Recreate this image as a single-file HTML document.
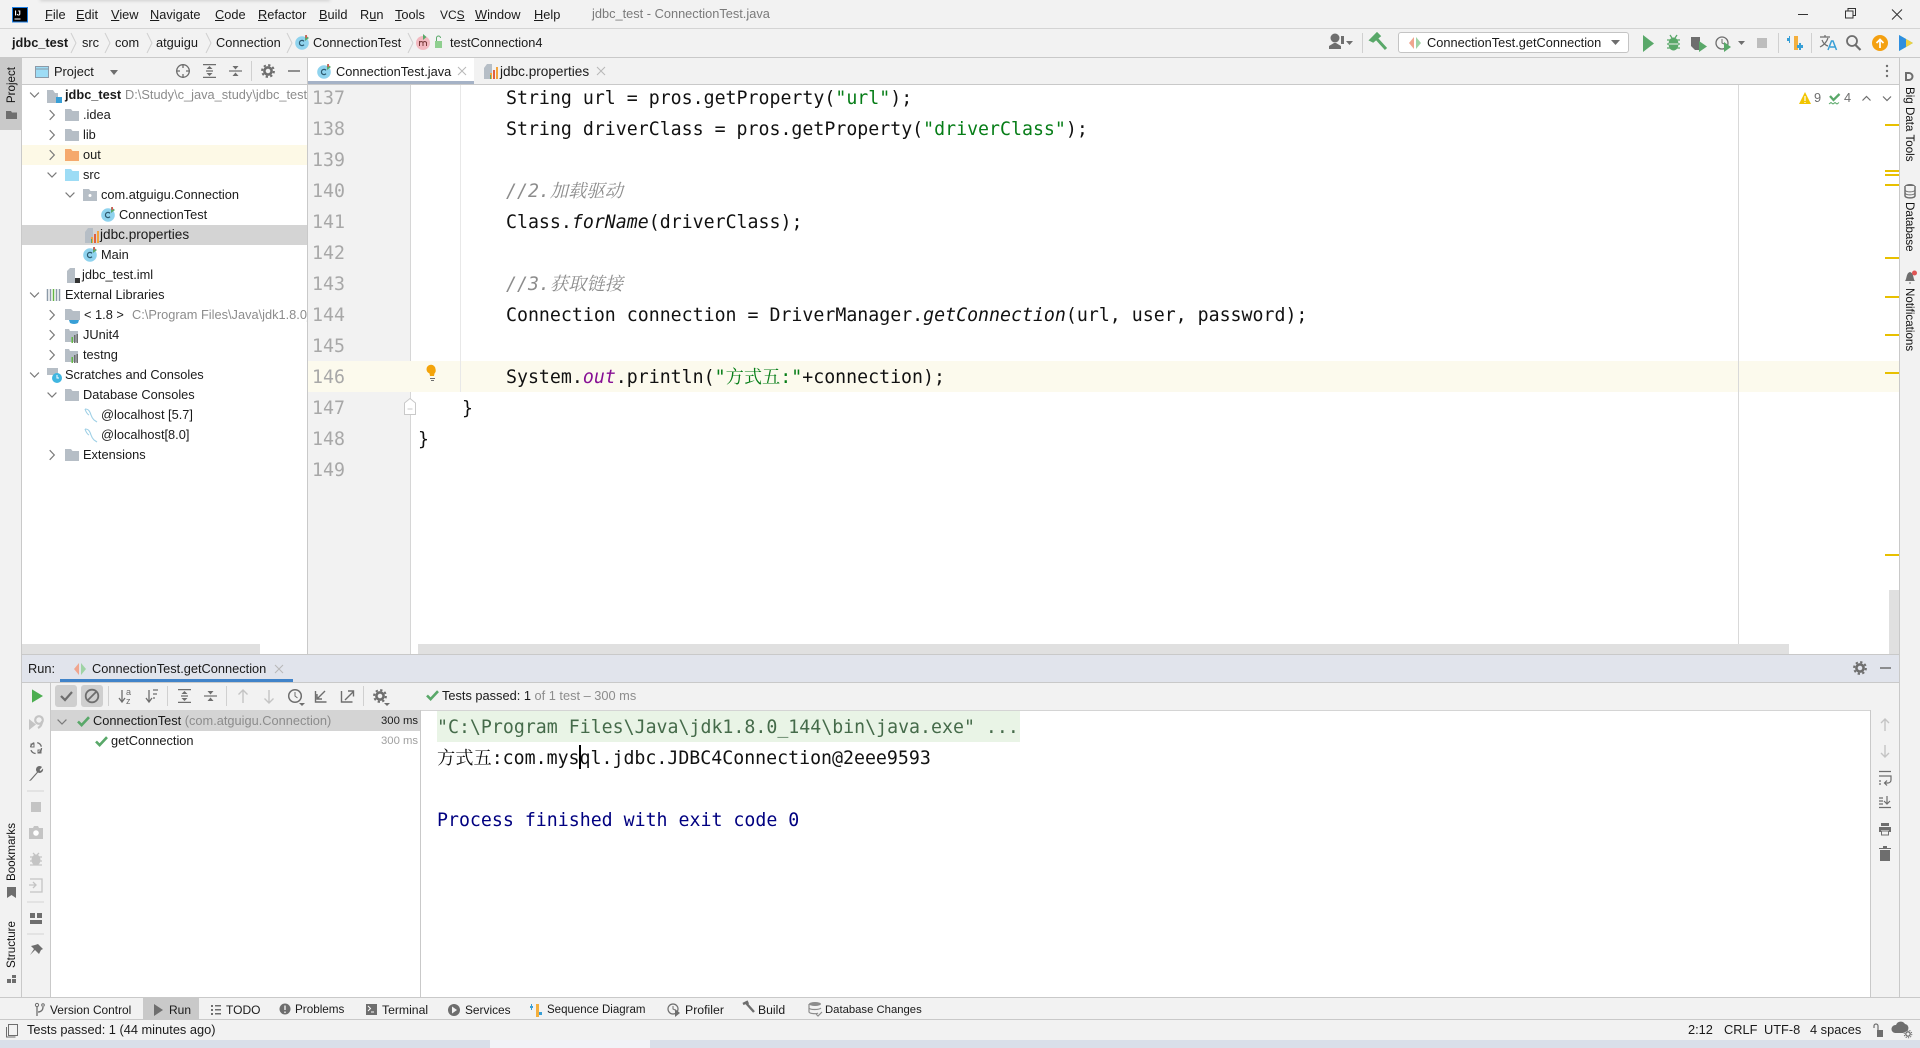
<!DOCTYPE html>
<html><head><meta charset="utf-8"><title>jdbc_test - ConnectionTest.java</title>
<style>
html,body{margin:0;padding:0;width:1920px;height:1048px;overflow:hidden;background:#f2f2f2}
body{position:relative;font-family:"Liberation Sans","Noto Sans CJK SC",sans-serif;font-size:12.8px;color:#1a1a1a}
.b{position:absolute}
.t{position:absolute;white-space:pre;line-height:20px;height:20px}
.g{color:#8c8c8c}
.code{position:absolute;white-space:pre;line-height:31px;height:31px;font-family:"DejaVu Sans Mono","Noto Serif CJK SC",monospace;font-size:18.24px;color:#111}
.n{color:#a8a8a8;left:312px}
.s{color:#067d17}
.c{color:#8c8c8c;font-style:italic}
.i{font-style:italic}
.p{color:#871094;font-style:italic}
.v{position:absolute;writing-mode:vertical-rl;font-size:11.6px;line-height:14px;white-space:pre;color:#111}
.r{transform:rotate(180deg)}
svg{position:absolute;left:0;top:0;overflow:visible}
</style></head><body>
<!-- regions -->
<div class="b" style="left:40px;top:-3px;width:290px;height:4px;background:#cfcfcf;filter:blur(1.5px)"></div>
<div class="b" style="left:0;top:28px;width:1920px;height:1px;background:#d4d4d4"></div>
<div class="b" style="left:0;top:57px;width:1920px;height:1px;background:#c9c9c9"></div>
<div class="b" style="left:0;top:58px;width:21px;height:72px;background:#c9c9c9"></div>
<div class="b" style="left:21px;top:58px;width:1px;height:939px;background:#c9c9c9"></div>
<div class="b" style="left:1899px;top:58px;width:1px;height:939px;background:#c9c9c9"></div>
<div class="b" style="left:22px;top:84px;width:1877px;height:1px;background:#c9c9c9"></div>
<!-- combo -->
<div class="b" style="left:1398px;top:32px;width:229px;height:19px;border:1px solid #c4c4c4;border-radius:3px;background:#fff"></div>
<!-- project panel -->
<div class="b" style="left:22px;top:85px;width:285px;height:569px;background:#fff"></div>
<div class="b" style="left:22px;top:145px;width:285px;height:20px;background:#fdf9e6"></div>
<div class="b" style="left:22px;top:225px;width:285px;height:20px;background:#d4d4d4"></div>
<div class="b" style="left:22px;top:644px;width:238px;height:10px;background:#e0e0e0"></div>
<div class="b" style="left:307px;top:58px;width:1px;height:596px;background:#c9c9c9"></div>
<!-- tabs -->
<div class="b" style="left:308px;top:58px;width:166px;height:26px;background:#fff"></div>
<div class="b" style="left:308px;top:81px;width:166px;height:3px;background:#a5b2c6"></div>
<!-- editor -->
<div class="b" style="left:308px;top:85px;width:102px;height:569px;background:#f2f2f2"></div>
<div class="b" style="left:410px;top:85px;width:1489px;height:569px;background:#fff"></div>
<div class="b" style="left:410px;top:85px;width:1px;height:569px;background:#d6d6d6"></div>
<div class="b" style="left:308px;top:361px;width:1591px;height:31px;background:#fcfaed"></div>
<div class="b" style="left:460px;top:85px;width:1px;height:307px;background:#e8e8e8"></div>
<div class="b" style="left:1738px;top:85px;width:1px;height:569px;background:#d9d9d9"></div>
<div class="b" style="left:418px;top:644px;width:1371px;height:10px;background:#e0e0e0"></div>
<div class="b" style="left:1889px;top:590px;width:10px;height:64px;background:#e0e0e0"></div>
<!-- stripes -->
<div class="b" style="left:1885px;top:124px;width:14px;height:2px;background:#e8c000"></div>
<div class="b" style="left:1885px;top:170px;width:14px;height:2px;background:#e8c000"></div>
<div class="b" style="left:1885px;top:174px;width:14px;height:2px;background:#e8c000"></div>
<div class="b" style="left:1885px;top:184px;width:14px;height:2px;background:#e8c000"></div>
<div class="b" style="left:1885px;top:257px;width:14px;height:2px;background:#e8c000"></div>
<div class="b" style="left:1885px;top:296px;width:14px;height:2px;background:#e8c000"></div>
<div class="b" style="left:1885px;top:334px;width:14px;height:2px;background:#e8c000"></div>
<div class="b" style="left:1885px;top:372px;width:14px;height:2px;background:#e8c000"></div>
<div class="b" style="left:1885px;top:554px;width:14px;height:2px;background:#e8c000"></div>
<!-- run window -->
<div class="b" style="left:22px;top:654px;width:1877px;height:28px;background:#e1e4ec;border-top:1px solid #c9c9c9;box-sizing:border-box"></div>
<div class="b" style="left:22px;top:682px;width:1877px;height:1px;background:#c9c9c9"></div>
<div class="b" style="left:60px;top:679px;width:233px;height:3px;background:#4083c9"></div>
<div class="b" style="left:50px;top:683px;width:1px;height:314px;background:#c9c9c9"></div>
<div class="b" style="left:51px;top:710px;width:1820px;height:287px;background:#fff"></div>
<div class="b" style="left:51px;top:710px;width:1820px;height:1px;background:#d4d4d4"></div>
<div class="b" style="left:51px;top:711px;width:369px;height:20px;background:#d4d4d4"></div>
<div class="b" style="left:420px;top:710px;width:1px;height:287px;background:#c9c9c9"></div>
<div class="b" style="left:1870px;top:710px;width:1px;height:287px;background:#c9c9c9"></div>
<div class="b" style="left:437px;top:711px;width:583px;height:31px;background:#e9f4e6"></div>
<div class="b" style="left:55px;top:685px;width:22px;height:22px;background:#cfcfcf;border-radius:3px"></div>
<div class="b" style="left:81px;top:685px;width:22px;height:22px;background:#cfcfcf;border-radius:3px"></div>
<!-- bottom -->
<div class="b" style="left:0;top:997px;width:1920px;height:1px;background:#c9c9c9"></div>
<div class="b" style="left:0;top:1019px;width:1920px;height:1px;background:#c9c9c9"></div>
<div class="b" style="left:143px;top:998px;width:56px;height:21px;background:#c9c9c9"></div>
<div class="b" style="left:0;top:1040px;width:490px;height:8px;background:#d9dfe9"></div>
<div class="b" style="left:490px;top:1040px;width:160px;height:8px;background:#f1f3f7"></div>
<div class="b" style="left:650px;top:1040px;width:1270px;height:8px;background:#d9dfe9"></div>

<!-- menu -->
<div class="t" style="left:45px;top:5px"><u>F</u>ile</div>
<div class="t" style="left:76px;top:5px"><u>E</u>dit</div>
<div class="t" style="left:111px;top:5px"><u>V</u>iew</div>
<div class="t" style="left:150px;top:5px"><u>N</u>avigate</div>
<div class="t" style="left:215px;top:5px"><u>C</u>ode</div>
<div class="t" style="left:258px;top:5px"><u>R</u>efactor</div>
<div class="t" style="left:319px;top:5px"><u>B</u>uild</div>
<div class="t" style="left:360px;top:5px">R<u>u</u>n</div>
<div class="t" style="left:395px;top:5px"><u>T</u>ools</div>
<div class="t" style="left:440px;top:5px;font-size:12px">VC<u>S</u></div>
<div class="t" style="left:475px;top:5px"><u>W</u>indow</div>
<div class="t" style="left:534px;top:5px"><u>H</u>elp</div>
<div class="t" style="left:592px;top:4px;color:#7a7a7a">jdbc_test - ConnectionTest.java</div>
<!-- breadcrumbs -->
<div class="t" style="left:12px;top:33px;font-weight:bold">jdbc_test</div>
<div class="t" style="left:82px;top:33px">src</div>
<div class="t" style="left:115px;top:33px">com</div>
<div class="t" style="left:156px;top:33px">atguigu</div>
<div class="t" style="left:216px;top:33px">Connection</div>
<div class="t" style="left:313px;top:33px">ConnectionTest</div>
<div class="t" style="left:450px;top:33px">testConnection4</div>
<div class="t" style="left:1427px;top:33px">ConnectionTest.getConnection</div>
<!-- project header & tabs -->
<div class="t" style="left:54px;top:62px">Project</div>
<div class="t" style="left:336px;top:62px">ConnectionTest.java</div>
<div class="t" style="left:500px;top:62px;font-size:13.6px">jdbc.properties</div>
<!-- tree -->
<div style="position:absolute;left:22px;top:85px;width:285px;height:400px;overflow:hidden">
<div class="t" style="left:43px;top:0;"><b>jdbc_test</b></div>
<div class="t g" style="left:103px;top:0">D:\Study\c_java_study\jdbc_test\</div>
<div class="t" style="left:61px;top:20px">.idea</div>
<div class="t" style="left:61px;top:40px">lib</div>
<div class="t" style="left:61px;top:60px">out</div>
<div class="t" style="left:61px;top:80px">src</div>
<div class="t" style="left:79px;top:100px">com.atguigu.Connection</div>
<div class="t" style="left:97px;top:120px">ConnectionTest</div>
<div class="t" style="left:78px;top:140px;font-size:13.6px">jdbc.properties</div>
<div class="t" style="left:79px;top:160px">Main</div>
<div class="t" style="left:60px;top:180px">jdbc_test.iml</div>
<div class="t" style="left:43px;top:200px">External Libraries</div>
<div class="t" style="left:62px;top:220px">&lt; 1.8 &gt;</div>
<div class="t g" style="left:110px;top:220px">C:\Program Files\Java\jdk1.8.0_144</div>
<div class="t" style="left:61px;top:240px">JUnit4</div>
<div class="t" style="left:61px;top:260px">testng</div>
<div class="t" style="left:43px;top:280px">Scratches and Consoles</div>
<div class="t" style="left:61px;top:300px">Database Consoles</div>
<div class="t" style="left:79px;top:320px">@localhost [5.7]</div>
<div class="t" style="left:79px;top:340px">@localhost[8.0]</div>
<div class="t" style="left:61px;top:360px">Extensions</div>
</div>
<!-- code -->
<div style="position:absolute;left:0;top:85px;width:1899px;height:400px;overflow:hidden">
<div style="position:absolute;left:0;top:-84px;width:1899px;height:500px">
<div class="code n" style="top:82px">137</div>
<div class="code n" style="top:113px">138</div>
<div class="code n" style="top:144px">139</div>
<div class="code n" style="top:175px">140</div>
<div class="code n" style="top:206px">141</div>
<div class="code n" style="top:237px">142</div>
<div class="code n" style="top:268px">143</div>
<div class="code n" style="top:299px">144</div>
<div class="code n" style="top:330px">145</div>
<div class="code n" style="top:361px">146</div>
<div class="code n" style="top:392px">147</div>
<div class="code n" style="top:423px">148</div>
<div class="code n" style="top:454px">149</div>
<div class="code" style="left:506px;top:82px">String url = pros.getProperty(<span class="s">"url"</span>);</div>
<div class="code" style="left:506px;top:113px">String driverClass = pros.getProperty(<span class="s">"driverClass"</span>);</div>
<div class="code c" style="left:506px;top:175px">//2.加载驱动</div>
<div class="code" style="left:506px;top:206px">Class.<span class="i">forName</span>(driverClass);</div>
<div class="code c" style="left:506px;top:268px">//3.获取链接</div>
<div class="code" style="left:506px;top:299px">Connection connection = DriverManager.<span class="i">getConnection</span>(url, user, password);</div>
<div class="code" style="left:506px;top:361px">System.<span class="p">out</span>.println(<span class="s">"方式五:"</span>+connection);</div>
<div class="code" style="left:462px;top:392px">}</div>
<div class="code" style="left:418px;top:423px">}</div>
</div></div>
<!-- annotations -->
<div class="t" style="left:1814px;top:88px;color:#6e6e6e">9</div>
<div class="t" style="left:1844px;top:88px;color:#6e6e6e">4</div>
<!-- run -->
<div class="t" style="left:28px;top:659px">Run:</div>
<div class="t" style="left:92px;top:659px">ConnectionTest.getConnection</div>
<div class="t" style="left:442px;top:686px">Tests passed: <span>1</span><span class="g"> of 1 test – 300 ms</span></div>
<div class="t" style="left:93px;top:711px">ConnectionTest <span class="g">(com.atguigu.Connection)</span></div>
<div class="t" style="left:381px;top:711px;font-size:11.3px">300 ms</div>
<div class="t" style="left:111px;top:731px">getConnection</div>
<div class="t g" style="left:381px;top:731px;font-size:11.3px;color:#a0a0a0">300 ms</div>
<div class="code" style="left:437px;top:712px;color:#456b4a">"C:\Program Files\Java\jdk1.8.0_144\bin\java.exe" ...</div>
<div class="code" style="left:437px;top:743px">方式五:com.mysql.jdbc.JDBC4Connection@2eee9593</div>
<div class="code" style="left:437px;top:805px;color:#000080">Process finished with exit code 0</div>
<div class="b" style="left:579px;top:745px;width:2px;height:24px;background:#000"></div>
<!-- bottom bar -->
<div class="t" style="left:50px;top:1000px;font-size:11.9px">Version Control</div>
<div class="t" style="left:169px;top:1000px;font-size:12px">Run</div>
<div class="t" style="left:226px;top:1000px;font-size:12px">TODO</div>
<div class="t" style="left:295px;top:1000px;font-size:11.7px">Problems</div>
<div class="t" style="left:382px;top:1000px;font-size:12.2px">Terminal</div>
<div class="t" style="left:465px;top:1000px;font-size:11.9px">Services</div>
<div class="t" style="left:547px;top:1000px;font-size:11.5px">Sequence Diagram</div>
<div class="t" style="left:685px;top:1000px;font-size:12.3px">Profiler</div>
<div class="t" style="left:758px;top:1000px;font-size:12.2px">Build</div>
<div class="t" style="left:825px;top:1000px;font-size:11.3px">Database Changes</div>
<!-- status -->
<div class="t" style="left:27px;top:1020px">Tests passed: 1 (44 minutes ago)</div>
<div class="t" style="left:1688px;top:1020px">2:12</div>
<div class="t" style="left:1724px;top:1020px">CRLF</div>
<div class="t" style="left:1764px;top:1020px">UTF-8</div>
<div class="t" style="left:1810px;top:1020px">4 spaces</div>
<div style="position:absolute;left:1800px;top:1040px;width:60px;height:8px;overflow:hidden"><div class="t" style="left:15px;top:4px;font-size:12px">22:24</div></div>
<!-- vertical -->
<div class="v r" style="left:5px;top:67px">Project</div>
<div class="v r" style="left:5px;top:823px">Bookmarks</div>
<div class="v r" style="left:5px;top:921px">Structure</div>
<div class="v" style="left:1902px;top:87px">Big Data Tools</div>
<div class="v" style="left:1902px;top:202px">Database</div>
<div class="v" style="left:1902px;top:288px">Notifications</div>

<svg width="1920" height="1048" viewBox="0 0 1920 1048" fill="none">
<defs>
<symbol id="cr" width="6" height="11" viewBox="0 0 6 11" overflow="visible"><path d="M.7.7l4.6 4.8L.7 10.3" stroke="#7a7a7a" stroke-width="1.2" fill="none"/></symbol>
<symbol id="cd" width="10" height="6" viewBox="0 0 10 6" overflow="visible"><path d="M.6.6L5 5l4.4-4.4" stroke="#7a7a7a" stroke-width="1.2" fill="none"/></symbol>
<symbol id="fd" width="14" height="12" viewBox="0 0 14 12"><path d="M0 0h6l1.5 2H14v10H0z"/></symbol>
<symbol id="sep" width="6" height="20" viewBox="0 0 6 20" overflow="visible"><path d="M0 0l5 10L0 20" stroke="#d0d0d0" fill="none"/></symbol>
<symbol id="cls" width="15" height="15" viewBox="0 0 15 15" overflow="visible"><circle cx="7" cy="8" r="6.8" fill="#8fd3ee"/><path d="M9 6.3A2.6 2.6 0 1 0 9 9.7" stroke="#2d5a70" stroke-width="1.2" fill="none"/><path d="M10 0l4 3-4 3z" fill="#59a869"/><path d="M10.5 0h1.5v3h-1.5z" fill="#e05555"/></symbol>
<symbol id="gear" width="14" height="14" viewBox="0 0 14 14" overflow="visible"><circle cx="7" cy="7" r="3.6" stroke="#6e6e6e" stroke-width="2.6" fill="none"/><circle cx="7" cy="7" r="5.9" stroke="#6e6e6e" stroke-width="2" stroke-dasharray="2.3 2.33" fill="none"/></symbol>
<symbol id="exp" width="13" height="14" viewBox="0 0 13 14" overflow="visible"><path d="M0 .6h13M0 13.4h13M3 7h7" stroke="#6e6e6e" stroke-width="1.2"/><path d="M6.5 2l3 3h-6zM6.5 12l3-3h-6z" fill="#6e6e6e"/></symbol>
<symbol id="col" width="13" height="14" viewBox="0 0 13 14" overflow="visible"><path d="M0 7h13" stroke="#6e6e6e" stroke-width="1.2"/><path d="M6.5 5.5l3-3.5h-6zM6.5 8.5l3 3.5h-6z" fill="#6e6e6e"/></symbol>
<symbol id="chk" width="13" height="11" viewBox="0 0 13 11" overflow="visible"><path d="M1 5.5l3.6 3.6L12 1.2" stroke="#59a869" stroke-width="2.6" fill="none"/></symbol>
<symbol id="lib" width="15" height="14" viewBox="0 0 15 14"><path d="M0 0h4l1 2h8v11H0z" fill="#b6bec6"/><path d="M9 6h1.5v8H9z" fill="#6e6e6e"/><path d="M6.5 8H8v6H6.5z" fill="#62b543"/><path d="M11.5 5H13v9h-1.5z" fill="#6e6e6e"/></symbol>
<symbol id="sql" width="14" height="15" viewBox="0 0 14 15" overflow="visible"><path d="M1 1c4 0 5 3 6 6s2 4 3 5l3 2M1 1c1 3 2 5 4 6" stroke="#9fd0e6" fill="none" stroke-width="1.1"/></symbol>
<symbol id="pr" width="14" height="15" viewBox="0 0 14 15"><path d="M3 0h5v15H0V4z" fill="#b6bec6"/><path d="M6 9h2v6H6z" fill="#f4a33a"/><path d="M9 6h2v9H9z" fill="#e0603f"/><path d="M12 3h2v12h-2z" fill="#f4a33a"/><path d="M6 11h1v4H6z" fill="#59a869"/></symbol>
<symbol id="rd" width="12" height="12" viewBox="0 0 12 12" overflow="visible"><path d="M5 0L0 6l5 6z" fill="#f0a58e"/><path d="M7 0l5 6-5 6z" fill="#9fd3a5"/></symbol>
</defs>

<!-- title bar icons -->
<rect x="12.5" y="7.5" width="15" height="14.5" fill="#000" stroke="#1c7fe6"/>
<text x="14.5" y="15.5" fill="#fff" font-family="Liberation Sans" font-size="7.5" font-weight="bold">IJ</text>
<path d="M14.5 19h6" stroke="#fff"/>
<path d="M1798 14.5h10" stroke="#333" stroke-width="1"/>
<path d="M1845.5 16.5h7.5v7h-7.5zM1848 16.500v-2.500h7.500v7H1853" stroke="#333" fill="none" transform="translate(0,-5.500)"/>
<path d="M1892 9.500l10 10M1902 9.500l-10 10" stroke="#333"/>
<!-- breadcrumb chevrons -->
<use href="#sep" x="71" y="33"/><use href="#sep" x="105" y="33"/><use href="#sep" x="147" y="33"/><use href="#sep" x="206" y="33"/><use href="#sep" x="287" y="33"/><use href="#sep" x="408" y="33"/>
<use href="#cls" x="295" y="35"/>
<circle cx="423" cy="43" r="7" fill="#f3b9c0"/><path d="M419.500 46v-5M419.500 42.500q1.700-2 3.500 0V46M423 42.500q1.700-2 3.500 0V46" stroke="#7a3a3a" fill="none"/><path d="M423 34l3.500 3-3.500 3z" fill="#59a869"/>
<path d="M435 41h7v7h-7z" fill="#8fcf8f"/><path d="M436.500 41v-3a2 2 0 0 1 4 0" stroke="#59a869" fill="none"/>
<!-- toolbar right -->
<circle cx="1335" cy="38" r="4.500" fill="#6e6e6e"/><path d="M1329 49v-3l5-3h2l5 3v3z" fill="#6e6e6e"/><path d="M1341 36h3v8h-3z" fill="#6e6e6e"/><path d="M1346 41h7l-3.500 4z" fill="#6e6e6e"/>
<path d="M1362.500 33v20M1778.500 33v20M1811.500 33v20" stroke="#d0d0d0"/>
<path d="M1371 40l6-6 2 2-6 5zM1376 38l10 11" stroke="#59a869" stroke-width="3" fill="none"/>
<use href="#rd" x="1409" y="37"/>
<path d="M1611 40h9l-4.500 5z" fill="#6e6e6e"/>
<path d="M1643 35l11 8.500-11 8.500z" fill="#59a869"/>
<ellipse cx="1673.500" cy="44" rx="5" ry="6.500" fill="#59a869"/><path d="M1667 40h13M1667 44h13M1667 48h13M1670 35l2 3M1677 35l-2 3" stroke="#59a869" stroke-width="1.300"/><path d="M1669 44h9" stroke="#f2f2f2"/>
<path d="M1691 37h9v7l-1 6h-4l-4-4z" fill="#6e6e6e"/><path d="M1699 41l8 5.500-8 5.500z" fill="#59a869"/>
<circle cx="1722" cy="43" r="6" stroke="#6e6e6e" stroke-width="1.300" fill="none"/><path d="M1722 39v4l2 1" stroke="#6e6e6e"/><path d="M1724 42l7 5-7 5z" fill="#59a869"/>
<path d="M1738 41h7l-3.500 4z" fill="#6e6e6e"/>
<rect x="1757" y="38" width="10" height="10" fill="#bdbdbd"/>
<path d="M1794 36h4v14h-4z" fill="#f4af3d"/><path d="M1787 38h3v3h-3zM1789 36h1v7h-1z" fill="#389fd6"/><path d="M1797 45h6v3h-6z" fill="#389fd6"/><path d="M1800 43v7" stroke="#389fd6" stroke-width="2"/>
<path d="M1820 37h10M1825 35v2M1828 38q-2 6-8 9M1822 40q2 5 6 6" stroke="#6e6e6e" stroke-width="1.200" fill="none"/><path d="M1828 50l3.500-9h1.500l3.500 9M1830 47h5" stroke="#389fd6" stroke-width="1.500" fill="none"/>
<circle cx="1852" cy="41" r="5" stroke="#6e6e6e" stroke-width="1.800" fill="none"/><path d="M1855.500 45l5 5" stroke="#6e6e6e" stroke-width="2.200"/>
<circle cx="1880" cy="43" r="8" fill="#f4a010"/><path d="M1880 48v-8M1876.500 43l3.500-3.500 3.500 3.500" stroke="#fff" stroke-width="1.700" fill="none"/>
<path d="M1899 35l14 8-14 8z" fill="#3dbfa0"/><path d="M1899 35l7 4v8l-7 4z" fill="#2f8fe0"/><path d="M1906 39l7 4-7 4z" fill="#f0d040"/>
<!-- left stripe -->
<path d="M6 111h5l1 1.500h5V119H6z" fill="#6e6e6e"/>
<path d="M7 887h9v11l-4.500-3-4.500 3z" fill="#6e6e6e"/>
<path d="M7 979h4v4H7zM12 979h4v4h-4zM12 975h4v3h-4z" fill="#6e6e6e"/>
<!-- project header -->
<rect x="35.500" y="66.500" width="13" height="11" fill="#9ddcf5" stroke="#8c9aa8"/><path d="M35.500 69h13" stroke="#8c9aa8"/>
<path d="M110 70h8l-4 5z" fill="#6e6e6e"/>
<circle cx="183" cy="71" r="6.300" stroke="#6e6e6e" stroke-width="1.300"/><path d="M183 64v4M183 74v4M176 71h4M186 71h4" stroke="#6e6e6e" stroke-width="1.300"/>
<use href="#exp" x="203" y="64"/><use href="#col" x="229" y="64"/>
<path d="M251.500 61v20" stroke="#d0d0d0"/>
<use href="#gear" x="261" y="64"/>
<path d="M288 71h12" stroke="#6e6e6e" stroke-width="1.500"/>
<use href="#cls" x="317" y="64"/><path d="M458 67l8 8M466 67l-8 8" stroke="#b8b8b8"/>
<use href="#pr" x="484" y="64"/><path d="M597 67l8 8M605 67l-8 8" stroke="#b8b8b8"/>
<circle cx="1887" cy="66" r="1.200" fill="#6e6e6e"/><circle cx="1887" cy="71" r="1.200" fill="#6e6e6e"/><circle cx="1887" cy="76" r="1.200" fill="#6e6e6e"/>
<!-- tree icons -->
<use href="#cd" x="29.500" y="92"/>
<path d="M47 90h6l2 3h3v10H47z" fill="#b6bec6"/><rect x="56" y="97" width="6" height="6" fill="#389fd6"/>
<use href="#cr" x="49" y="109.500"/><use href="#fd" x="65" y="109" fill="#b6bec6"/>
<use href="#cr" x="49" y="129.500"/><use href="#fd" x="65" y="129" fill="#b6bec6"/>
<use href="#cr" x="49" y="149.500"/><use href="#fd" x="65" y="149" fill="#f5a96d"/>
<use href="#cd" x="47" y="172"/><use href="#fd" x="65" y="169" fill="#9ddcf5"/>
<use href="#cd" x="65" y="192"/><use href="#fd" x="83" y="189" fill="#b6bec6"/><circle cx="90" cy="195.500" r="1.500" fill="#fff"/>
<use href="#cls" x="101" y="207"/>
<use href="#pr" x="85" y="228"/>
<use href="#cls" x="83" y="247"/>
<path d="M70 268h5v15h-8v-12z" fill="#b6bec6"/><rect x="75" y="278" width="5" height="5" fill="#333"/>
<use href="#cd" x="29.500" y="292"/>
<path d="M47.500 289v12M50.500 289v12" stroke="#8c9aa8" stroke-width="1.500"/><path d="M53.500 289v12" stroke="#62b543" stroke-width="1.500"/><path d="M56.500 289v12M59.500 289v12" stroke="#8c9aa8" stroke-width="1.500"/>
<use href="#cr" x="49" y="309.500"/><path d="M65 309h6l2 2h7v9H65z" fill="#b6bec6"/><path d="M69 320h10l-1 3q-4 2-8 0z" fill="#389fd6"/>
<use href="#cr" x="49" y="329.500"/><use href="#lib" x="65" y="329"/>
<use href="#cr" x="49" y="349.500"/><use href="#lib" x="65" y="349"/>
<use href="#cd" x="29.500" y="372"/>
<path d="M47 368h11v7H47z" fill="#b6bec6"/><circle cx="57" cy="378" r="5" fill="#40b6e0"/><path d="M57 375v3h2" stroke="#fff"/>
<use href="#cd" x="47" y="392"/><use href="#fd" x="65" y="389" fill="#b6bec6"/>
<use href="#sql" x="84" y="408"/><use href="#sql" x="84" y="428"/>
<use href="#cr" x="49" y="449.500"/><use href="#fd" x="65" y="449" fill="#b6bec6"/>
<!-- editor gutter -->
<g transform="translate(4,4)"><path d="M432 366a4.500 4.500 0 1 0-6 4.500l.5 2.500h4l.5-2.500a4.500 4.500 0 0 0 1-4.500z" fill="#f4a40a" transform="translate(-.5,-1)"/><path d="M429 374.500h5M430 376.500h3" stroke="#6e6e6e" transform="translate(-3,0)"/></g>
<path d="M404.500 403l5.500-4.500 5.500 4.500v11.500h-11z" fill="#fff" stroke="#c9c9c9"/><path d="M407.500 409h5" stroke="#c9c9c9"/>
<!-- annotations -->
<path d="M1805 92l6 12h-12z" fill="#f2c500"/><path d="M1805 96v5M1805 102v1" stroke="#fff" stroke-width="1.200"/>
<path d="M1830 96l3.500 4 6-6" stroke="#59a869" stroke-width="2.300" fill="none"/><path d="M1829 104l2-1.500 2 1.500 2-1.500 2 1.500 2-1.500" stroke="#59a869"/>
<path d="M1862.500 100.500l4-4 4 4" stroke="#6e6e6e" stroke-width="1.200" fill="none"/>
<path d="M1883 96.500l4 4 4-4" stroke="#6e6e6e" stroke-width="1.200" fill="none"/>
<!-- right stripe icons -->
<path d="M1905 72h4a4.500 4.500 0 0 1 0 9h-4zM1907 74v5h2a2.500 2.500 0 0 0 0-5z" fill="#6e6e6e" fill-rule="evenodd"/>
<ellipse cx="1910" cy="186" rx="5" ry="2" fill="#6e6e6e"/><path d="M1905 186v10c1 2.500 9 2.500 10 0v-10" stroke="#6e6e6e" stroke-width="1.500" fill="#f2f2f2"/><path d="M1905 190c1 2.500 9 2.500 10 0M1905 193c1 2.500 9 2.500 10 0" stroke="#6e6e6e"/>
<path d="M1905 281c2-2 1-8 5-9 4 1 3 7 5 9z" fill="#6e6e6e"/><path d="M1909 283h2" stroke="#6e6e6e"/><circle cx="1914.500" cy="273" r="2.500" fill="#e05555"/>
<!-- run header -->
<use href="#rd" x="74" y="663"/><path d="M275 665l8 8M283 665l-8 8" stroke="#b8b8b8"/>
<use href="#gear" x="1853" y="661"/><path d="M1880 668h11" stroke="#6e6e6e" stroke-width="1.500"/>
<!-- run toolbar -->
<path d="M32 690l11 6-11 6z" fill="#4cae50" transform="matrix(1 0 0 1.100 0 -69.600)"/>
<path d="M61 696l4 4 7-8" stroke="#6e6e6e" stroke-width="2.200"/>
<circle cx="92" cy="696" r="6.300" stroke="#6e6e6e" stroke-width="1.800"/><path d="M88 700l8-8" stroke="#6e6e6e" stroke-width="1.800"/>
<path d="M108.500 686v20M167.500 686v20M226.500 686v20M363.500 686v20" stroke="#d0d0d0"/>
<path d="M122 690v12M119 698l3 4 3-4" stroke="#6e6e6e" stroke-width="1.300"/><text x="126" y="695" font-family="Liberation Sans" font-size="9" fill="#6e6e6e">a</text><text x="126" y="704" font-family="Liberation Sans" font-size="9" fill="#6e6e6e">z</text>
<path d="M149 690v12M146 698l3 4 3-4M153 690h5M153 694h4M153 698h2" stroke="#6e6e6e" stroke-width="1.300"/>
<use href="#exp" x="178" y="689"/><use href="#col" x="204" y="689"/>
<path d="M243 703v-13M238.500 694.500l4.500-4.500 4.500 4.500M269 690v13M264.500 698.500l4.500 4.500 4.500-4.500" stroke="#c4c4c4" stroke-width="1.400"/>
<circle cx="295" cy="696" r="6.300" stroke="#6e6e6e" stroke-width="1.500"/><path d="M295 692v4l2.500 2" stroke="#6e6e6e"/><path d="M299 703h6l-3 3z" fill="#6e6e6e"/>
<path d="M315.500 691v11h11M325 691l-8 8M317 694v5h5" stroke="#6e6e6e" stroke-width="1.400"/>
<path d="M341.500 691v11h11M345 700l8-8M348 691h5.500v5.500" stroke="#6e6e6e" stroke-width="1.400"/>
<use href="#gear" x="373" y="689"/><path d="M384 703h6l-3 3z" fill="#6e6e6e"/>
<use href="#chk" x="426" y="690"/>
<!-- left col icons -->
<path d="M29 719l7 5.500-7 5.500z" fill="#c4c4c4"/><circle cx="39" cy="720" r="3.800" stroke="#c4c4c4" stroke-width="2.200"/><path d="M42 721q0 5-4 7" stroke="#c4c4c4" stroke-width="2.200"/>
<circle cx="36" cy="748" r="5.500" stroke="#6e6e6e" stroke-width="1.300" stroke-dasharray="6 3"/><rect x="31" y="744" width="3" height="3" stroke="#6e6e6e"/><rect x="38" y="750" width="3" height="3" stroke="#6e6e6e"/>
<path d="M30 780l8-9a3.500 3.500 0 0 1 5-5l-2.500 3 1 1 2.500-2.500a3.500 3.500 0 0 1-5 4l-7 8z" fill="#6e6e6e" transform="translate(-1,1)"/>
<path d="M27 791h17M27 902h17M27 934h17" stroke="#d4d4d4"/>
<rect x="31" y="802" width="10" height="10" fill="#c4c4c4"/>
<path d="M29 828h4l1-2h4l1 2h4v11H29z" fill="#c4c4c4"/><circle cx="36" cy="833" r="2.800" fill="#fff"/>
<ellipse cx="36" cy="860" rx="4.500" ry="5.500" fill="#c4c4c4"/><path d="M30 857h12M30 861h12M30 865h12M33 853l2 2M39 853l-2 2" stroke="#c4c4c4" stroke-width="1.300"/>
<path d="M30 879h12v13H30M29 885h7M33 882l3 3-3 3" stroke="#c4c4c4" stroke-width="1.300"/>
<path d="M30 913h5v5h-5zM37 913h5v5h-5zM30 920h12v4H30z" fill="#6e6e6e"/>
<path d="M38 944l5 5-2 1-2 4-4-4-5 5 4-6-3-3 4-1z" fill="#6e6e6e"/>
<!-- run tree -->
<use href="#cd" x="57" y="719"/><use href="#chk" x="77" y="716"/><use href="#chk" x="95" y="736"/>
<!-- console right -->
<path d="M1885 731v-12M1881 723l4-4 4 4M1885 757v-12M1881 753l4 4 4-4" stroke="#c4c4c4" stroke-width="1.400"/>
<path d="M1879 771.500h12M1879 776h12v4a3 3 0 0 1-3 3h-3M1887 780.500l-2.500 2.500 2.500 2.500M1879 781h2M1879 784h2" stroke="#6e6e6e" stroke-width="1.200"/>
<path d="M1879 798h4M1879 801h4M1879 804h4M1879 807.500h12M1887 796v8M1884 801l3 3 3-3" stroke="#6e6e6e" stroke-width="1.200"/>
<path d="M1881 823h8v3h-8zM1879 827h12v5h-2v-2h-8v2h-2z" fill="#6e6e6e"/><rect x="1881.500" y="831" width="7" height="4" stroke="#6e6e6e"/>
<path d="M1880 850h10v11h-10zM1879 848h12v1h-12zM1883 846h4v2h-4z" fill="#6e6e6e"/>
<!-- bottom bar icons -->
<circle cx="37" cy="1005" r="1.600" stroke="#6e6e6e"/><path d="M37 1007v9M38 1012c3 0 5-2 5-5" stroke="#6e6e6e" stroke-width="1.300"/><circle cx="43" cy="1005" r="1.300" stroke="#6e6e6e"/>
<path d="M154 1004l9 6-9 6z" fill="#6e6e6e"/>
<path d="M211 1005h2v2h-2zM211 1009h2v2h-2zM211 1013h2v2h-2zM215 1005h6v1.500h-6zM215 1009h6v1.500h-6zM215 1013h6v1.500h-6z" fill="#6e6e6e"/>
<circle cx="285" cy="1009" r="5.500" fill="#6e6e6e"/><path d="M285 1005.500v4.500M285 1011.500v1.500" stroke="#f2f2f2" stroke-width="1.400"/>
<rect x="366" y="1004" width="11" height="11" fill="#6e6e6e"/><path d="M368 1006l2.500 2.500-2.500 2.500M371 1012h3" stroke="#fff"/>
<circle cx="454" cy="1010" r="6" fill="#6e6e6e"/><path d="M452 1006.500l5 3.500-5 3.500z" fill="#f2f2f2"/>
<path d="M536 1004h3v13h-3z" fill="#f4af3d"/><path d="M530 1006h3v2h-3zM531 1004h1v6h-1z" fill="#389fd6"/><path d="M539 1012h3v3h-3z" fill="#389fd6"/>
<circle cx="673" cy="1009" r="5" stroke="#6e6e6e" stroke-width="1.200"/><path d="M673 1006v3l2 1" stroke="#6e6e6e"/><path d="M675 1009l5 4-5 4z" fill="#6e6e6e"/>
<path d="M743 1004l4-2 1 2M746 1003l8 9" stroke="#6e6e6e" stroke-width="2.400"/>
<ellipse cx="815" cy="1004" rx="6" ry="2" fill="#8c8c8c"/><path d="M809 1004v8c1 2 8 2 9 1M809 1008c1 2 10 2 12 0" stroke="#8c8c8c" stroke-width="1.200"/><path d="M816 1014l2 2 4-4" stroke="#8c8c8c" stroke-width="1.200"/>
<!-- status icons -->
<rect x="8.500" y="1024.500" width="9" height="11" stroke="#6e6e6e" fill="#f2f2f2"/><path d="M6.500 1027v10h9" stroke="#6e6e6e"/>
<path d="M1877 1030h6v7h-6z" fill="#6e6e6e"/><path d="M1874 1028v-2a2 2 0 0 1 4 0v4" stroke="#6e6e6e" stroke-width="1.200"/>
<path d="M1895 1033a4 4 0 0 1 1-8 5 5 0 0 1 9-1 4 4 0 0 1 2 7l-4 2z" fill="#6e6e6e"/><circle cx="1908" cy="1034" r="2.200" stroke="#6e6e6e" stroke-width="1.300"/><circle cx="1908" cy="1034" r="3.800" stroke="#6e6e6e" stroke-dasharray="1.200 1.200"/>
</svg>
</body></html>
